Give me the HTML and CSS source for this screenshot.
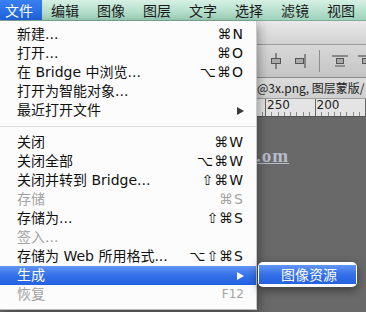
FILE: index.html
```html
<!DOCTYPE html>
<html lang="zh-CN">
<head>
<meta charset="utf-8">
<title>Photoshop 文件菜单</title>
<link rel="stylesheet" href="styles.css">
</head>
<body>
<div class="screen">
  <nav class="menubar">
    <span class="mb-item active">文件</span>
    <span class="mb-item">编辑</span>
    <span class="mb-item">图像</span>
    <span class="mb-item">图层</span>
    <span class="mb-item">文字</span>
    <span class="mb-item">选择</span>
    <span class="mb-item">滤镜</span>
    <span class="mb-item">视图</span>
  </nav>
  <div class="workspace">
    <div class="apphead"></div>
    <div class="toolbar">
      <div class="tools">
        <svg class="ico" width="14" height="16" viewBox="0 0 14 16"><path d="M7 0v16" stroke="#555" stroke-width="1.2"/><rect x="2.5" y="5.5" width="9" height="5" fill="#aaa" stroke="#555"/></svg>
        <svg class="ico" width="14" height="16" viewBox="0 0 14 16"><path d="M12 1v14" stroke="#555" stroke-width="1.2"/><rect x="2.5" y="5.5" width="8" height="5" fill="#aaa" stroke="#555"/></svg>
        <span class="tsep"></span>
        <svg class="ico" width="16" height="14" viewBox="0 0 16 14"><path d="M0 2h16" stroke="#555" stroke-width="1.2"/><rect x="4.5" y="4.5" width="7" height="5" fill="#aaa" stroke="#555"/><path d="M3 12h10" stroke="#555"/></svg>
        <svg class="ico" width="16" height="14" viewBox="0 0 16 14"><path d="M0 2h16" stroke="#555" stroke-width="1.2"/><rect x="4.5" y="4.5" width="7" height="5" fill="#aaa" stroke="#555"/></svg>
      </div>
    </div>
    <div class="tabbar"><span class="tabtext">@3x.png, 图层蒙版/</span></div>
    <div class="ruler">
      <span class="rnum">250</span>
      <span class="rnum">200</span>
    </div>
    <div class="canvas"></div>
  </div>

  <span class="watermark">.om</span>

  <div class="menu">
    <div class="item"><span>新建...</span><span class="key">⌘N</span></div>
    <div class="item"><span>打开...</span><span class="key">⌘O</span></div>
    <div class="item"><span>在 Bridge 中浏览...</span><span class="key">⌥⌘O</span></div>
    <div class="item"><span>打开为智能对象...</span><span class="key"></span></div>
    <div class="item"><span>最近打开文件</span><span class="arrow"></span></div>
    <div class="sep"></div>
    <div class="item"><span>关闭</span><span class="key">⌘W</span></div>
    <div class="item"><span>关闭全部</span><span class="key">⌥⌘W</span></div>
    <div class="item"><span>关闭并转到 Bridge...</span><span class="key">⇧⌘W</span></div>
    <div class="item disabled"><span>存储</span><span class="key">⌘S</span></div>
    <div class="item"><span>存储为...</span><span class="key">⇧⌘S</span></div>
    <div class="item disabled"><span>签入...</span><span class="key"></span></div>
    <div class="item"><span>存储为 Web 所用格式...</span><span class="key">⌥⇧⌘S</span></div>
    <div class="item selected"><span>生成</span><span class="arrow"></span></div>
    <div class="item disabled"><span>恢复</span><span class="key small">F12</span></div>
  </div>

  <div class="submenu">
    <div class="sub-item">图像资源</div>
  </div>
</div>
</body>
</html>
```
FILE: styles.css
```css
html, body {
  margin: 0;
  padding: 0;
}
body {
  width: 366px;
  height: 312px;
  overflow: hidden;
  font-family: "DejaVu Sans", "Noto Sans CJK SC", sans-serif;
  font-size: 14px;
  color: #111;
}
.screen {
  position: relative;
  width: 366px;
  height: 312px;
  overflow: hidden;
  display: flex;
  flex-direction: column;
}
.menubar {
  height: 21px;
  flex: none;
  display: flex;
  align-items: stretch;
  background: linear-gradient(#d6f0e3, #b3decb 60%, #9fd2bb);
  border-bottom: 1px solid #7fae99;
  box-sizing: border-box;
  font-family: "Noto Sans CJK SC", sans-serif;
  font-size: 14px;
}
.mb-item {
  padding: 0 9px;
  line-height: 20px;
  color: #1a1a1a;
}
.mb-item.active {
  padding-left: 5px;
  color: #fff;
  background: linear-gradient(#3a7ff0, #1f63dc);
}
.workspace {
  flex: 1;
  display: flex;
  flex-direction: column;
}
.apphead {
  height: 23px;
  background: linear-gradient(#e9e9e9, #d2d2d2);
  border-bottom: 1px solid #9c9c9c;
}
.toolbar {
  height: 32px;
  background: linear-gradient(#d8d8d8, #c4c4c4);
  border-bottom: 1px solid #8a8a8a;
  display: flex;
  align-items: center;
  padding-left: 269px;
}
.tools {
  display: flex;
  align-items: center;
  gap: 10px;
}
.tsep {
  width: 1px;
  height: 22px;
  background: #8e8e8e;
  margin: 0 2px;
}
.tabbar {
  height: 20px;
  background: linear-gradient(#dcdcdc, #cfcfcf);
  border-bottom: 1px solid #a0a0a0;
  padding-left: 257px;
  font-family: "Noto Sans CJK SC", sans-serif;
  font-size: 12px;
  line-height: 20px;
  color: #222;
  white-space: nowrap;
}
.ruler {
  height: 17px;
  background-color: #e4e4e4;
  background-image:
    repeating-linear-gradient(90deg, #666 0 1px, transparent 1px 50px),
    repeating-linear-gradient(90deg, #888 0 1px, transparent 1px 6.25px);
  background-size: 100% 100%, 100% 4px;
  background-position: 265px 0, 265px 100%;
  background-repeat: no-repeat, repeat-x;
  display: flex;
  padding-left: 267px;
  font-size: 12px;
  line-height: 13px;
  color: #222;
  border-bottom: 1px solid #555;
}
.rnum {
  width: 50px;
}
.canvas {
  flex: 1;
  background: #696969;
}
.watermark {
  position: absolute;
  left: 256px;
  top: 145px;
  font-family: "Liberation Serif", serif;
  font-weight: bold;
  font-size: 19px;
  color: #b7bccb;
  text-decoration: underline;
  letter-spacing: 1px;
}
.menu {
  position: absolute;
  left: 0;
  top: 21px;
  width: 257px;
  height: 289px;
  box-sizing: border-box;
  padding-top: 4px;
  background: #fcfcfc;
  border-right: 1px solid #c8c8c8;
  border-bottom: 1px solid #bdbdbd;
  box-shadow: 2px 3px 10px rgba(0, 0, 0, 0.35);
  font-family: "DejaVu Sans", "Noto Sans CJK SC", sans-serif;
  font-size: 14px;
}
.item {
  display: flex;
  justify-content: space-between;
  align-items: center;
  height: 19px;
  line-height: 19px;
  padding: 0 12px 0 17px;
  white-space: nowrap;
}
.item.disabled {
  color: #a3a3a3;
}
.item.selected {
  color: #fff;
  background: linear-gradient(#6296f3, #3470e8 50%, #2361e2);
}
.key {
  font-size: 14px;
  letter-spacing: 1px;
}
.key.small {
  font-size: 12px;
  letter-spacing: 0;
}
.arrow {
  width: 0;
  height: 0;
  border-left: 7px solid #3a3a3a;
  border-top: 4px solid transparent;
  border-bottom: 4px solid transparent;
}
.item.selected .arrow {
  border-left-color: #fff;
}
.sep {
  height: 1px;
  background: #dedede;
  margin: 6px 0;
}
.submenu {
  position: absolute;
  left: 258px;
  top: 262px;
  width: 99px;
  height: 25px;
  box-sizing: border-box;
  padding: 3px 1px 3px 1px;
  background: #fcfcfc;
  border-radius: 5px;
  box-shadow: 0 3px 10px rgba(0, 0, 0, 0.45);
}
.sub-item {
  height: 19px;
  line-height: 19px;
  padding-left: 22px;
  color: #fff;
  font-family: "Noto Sans CJK SC", sans-serif;
  font-size: 14px;
  background: linear-gradient(#6296f3, #3470e8 50%, #2361e2);
}
```
